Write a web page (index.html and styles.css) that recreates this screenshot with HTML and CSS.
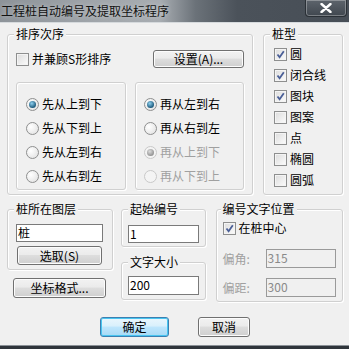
FILE: index.html
```html
<!DOCTYPE html>
<html lang="zh-CN">
<head>
  <meta charset="UTF-8" />
  <title>工程桩自动编号及提取坐标程序</title>
  <link rel="stylesheet" href="styles.css">
</head>
<body>
  <div class="window">
    <div class="titlebar">
      <span class="title">工程桩自动编号及提取坐标程序</span>
      <span class="close">
        <svg width="12" height="10" viewBox="0 0 12 10"><path d="M1.5 1 L10.5 9 M10.5 1 L1.5 9" stroke="#fff" stroke-width="2.4" stroke-linecap="round"/></svg>
      </span>
    </div>

    <div class="client">
      <div class="row-top">
        <div class="group order">
          <span class="legend">排序次序</span>
          <div class="order-head">
            <label class="check"><span class="box"></span>并兼顾S形排序</label>
            <button class="btn setup">设置(A)...</button>
          </div>
          <div class="order-cols">
            <div class="group inner first">
              <label class="radio on"><span class="dot"></span>先从上到下</label>
              <label class="radio"><span class="dot"></span>先从下到上</label>
              <label class="radio"><span class="dot"></span>先从左到右</label>
              <label class="radio"><span class="dot"></span>先从右到左</label>
            </div>
            <div class="group inner second">
              <label class="radio on"><span class="dot"></span>再从左到右</label>
              <label class="radio"><span class="dot"></span>再从右到左</label>
              <label class="radio on off"><span class="dot"></span>再从上到下</label>
              <label class="radio off"><span class="dot"></span>再从下到上</label>
            </div>
          </div>
        </div>

        <div class="group type">
          <span class="legend">桩型</span>
          <label class="check on"><span class="box"></span>圆</label>
          <label class="check on"><span class="box"></span>闭合线</label>
          <label class="check on"><span class="box"></span>图块</label>
          <label class="check"><span class="box"></span>图案</label>
          <label class="check"><span class="box"></span>点</label>
          <label class="check"><span class="box"></span>椭圆</label>
          <label class="check"><span class="box"></span>圆弧</label>
        </div>
      </div>

      <div class="row-bottom">
        <div class="col-left">
          <div class="group layer">
            <span class="legend">桩所在图层</span>
            <div class="field layer-field">桩</div>
            <button class="btn pick">选取(S)</button>
          </div>
          <button class="btn coord">坐标格式...</button>
        </div>

        <div class="col-mid">
          <div class="group start">
            <span class="legend">起始编号</span>
            <div class="field num-field">1</div>
          </div>
          <div class="group size">
            <span class="legend">文字大小</span>
            <div class="field num-field">200</div>
          </div>
        </div>

        <div class="group pos">
          <span class="legend">编号文字位置</span>
          <label class="check on center"><span class="box"></span>在桩中心</label>
          <div class="pos-row first">
            <span class="pos-label">偏角:</span>
            <div class="field dim">315</div>
          </div>
          <div class="pos-row">
            <span class="pos-label">偏距:</span>
            <div class="field dim">300</div>
          </div>
        </div>
      </div>

      <div class="actions">
        <button class="btn default ok">确定</button>
        <button class="btn cancel">取消</button>
      </div>
    </div>
    <div class="frame-bottom"></div>
  </div>
</body>
</html>
```

FILE: styles.css
```css
* {
  box-sizing: border-box;
}

body {
  margin: 0;
  padding: 0;
  font-family: "Noto Sans CJK SC", "Noto Sans", sans-serif;
  font-size: 12px;
  color: #000;
  background: #f0f0f0;
  overflow: hidden;
}

.window {
  width: 349px;
  height: 349px;
  display: flex;
  flex-direction: column;
  background: #f0f0f0;
}

/* title bar */
.titlebar {
  height: 23px;
  display: flex;
  align-items: flex-start;
  justify-content: space-between;
  background: linear-gradient(90deg, #8d9399 0%, #a2a7ac 30%, #a7acb1 46%, #6b7279 56%, #4b525a 68%, #474e56 100%);
  border-bottom: 1px solid #d6dadd;
}

.title {
  padding-left: 1px;
  line-height: 21px;
  color: #111;
  text-shadow: 0 0 4px rgba(255, 255, 255, 0.5);
  white-space: nowrap;
}

.close {
  width: 42px;
  height: 17px;
  margin-right: 2px;
  display: flex;
  align-items: center;
  justify-content: center;
  background: linear-gradient(#5d646c, #40474f);
  border: 1px solid #2a3036;
  border-top: none;
  border-radius: 0 0 4px 4px;
  box-shadow: inset 0 0 0 1px rgba(255, 255, 255, 0.3);
}

.client {
  flex: 1;
  padding: 11px 6px 0 7px;
}

/* group boxes */
.group {
  position: relative;
  border: 1px solid #d0d0d0;
  border-radius: 3px;
  box-shadow: inset 1px 1px 0 #fff, 1px 1px 0 #fff;
}

.legend {
  position: absolute;
  top: -9px;
  left: 6px;
  padding: 0 2px;
  line-height: 16px;
  background: #f0f0f0;
  white-space: nowrap;
}

.row-top {
  display: flex;
  gap: 10px;
}

.order {
  width: 246px;
  height: 161px;
  padding: 15px 8px 0 8px;
}

.order-head {
  display: flex;
  align-items: center;
  justify-content: space-between;
  height: 18px;
}

.order-cols {
  display: flex;
  gap: 9px;
  margin-top: 14px;
}

.inner {
  width: 111px;
  height: 108px;
  padding: 13px 0 0 9px;
  display: flex;
  flex-direction: column;
  gap: 8px;
}

.inner.second {
  width: 110px;
  padding-left: 8px;
}

.type {
  width: 80px;
  height: 161px;
  padding: 11px 0 0 10px;
  display: flex;
  flex-direction: column;
  gap: 5px;
}

/* check boxes and radios */
.check, .radio {
  display: flex;
  align-items: center;
  gap: 3px;
  height: 16px;
  line-height: 16px;
  white-space: nowrap;
}

.box {
  width: 13px;
  height: 13px;
  border: 1px solid #8e8f8f;
  background: linear-gradient(135deg, #dcdcdc, #fcfcfc);
  box-shadow: inset 0 0 0 1px #f4f4f4;
  flex: none;
}

.check.on .box {
  background: linear-gradient(135deg, #dcdcdc, #fcfcfc) center / 11px 11px no-repeat;
  background-image: url("data:image/svg+xml,%3Csvg xmlns='http://www.w3.org/2000/svg' width='11' height='11'%3E%3Cpath d='M2.5 5.5 L4.6 8.2 L8.8 2.2' fill='none' stroke='%234a5f97' stroke-width='1.8'/%3E%3C/svg%3E"), linear-gradient(135deg, #dcdcdc, #fcfcfc);
}

.dot {
  width: 13px;
  height: 13px;
  border-radius: 50%;
  border: 1px solid #8e8f8f;
  background: radial-gradient(circle at 35% 35%, #fff, #dedede);
  flex: none;
  display: flex;
  align-items: center;
  justify-content: center;
}

.radio.on .dot::after {
  content: "";
  width: 7px;
  height: 7px;
  border-radius: 50%;
  background: radial-gradient(circle at 40% 35%, #8fd0ef, #1c5a7c 70%);
}

.radio.off {
  color: #a0a0a0;
}

.radio.off .dot {
  border-color: #c9c9c9;
  background: #f4f4f4;
}

.radio.on.off .dot::after {
  background: radial-gradient(circle at 40% 35%, #dcdcdc, #8f8f8f 75%);
}

/* buttons */
.btn {
  font: inherit;
  color: #000;
  padding: 0;
  border: 1px solid #707070;
  border-radius: 3px;
  background: linear-gradient(#f2f2f2 0%, #ebebeb 45%, #dddddd 50%, #cfcfcf 100%);
  box-shadow: inset 0 0 0 1px #fcfcfc;
  line-height: 16px;
}

.btn.default {
  border-color: #3c7fb1;
  background: linear-gradient(#eaf6fd 0%, #d9f0fc 45%, #bee6fd 50%, #a7d9f5 100%);
  box-shadow: inset 0 0 0 1px #48c5f0;
}

.setup {
  width: 91px;
  height: 18px;
}

/* text fields */
.field {
  height: 18px;
  border: 1px solid #7a7a7a;
  background: #fff;
  line-height: 16px;
  padding-left: 1px;
}

.field.dim {
  width: 70px;
  height: 19px;
  border-color: #9a9a9a;
  background: #f0f0f0;
  color: #8a8a8a;
}

.row-bottom {
  display: flex;
  margin-top: 14px;
}

.layer {
  width: 106px;
  height: 61px;
  padding: 14px 0 0 8px;
}

.layer-field {
  width: 87px;
}

.pick {
  display: block;
  width: 85px;
  height: 19px;
  margin: 4px 0 0 1px;
}

.coord {
  display: block;
  width: 93px;
  height: 20px;
  margin: 8px 0 0 6px;
}

.col-mid {
  width: 85px;
  margin-left: 8px;
}

.start {
  height: 38px;
  padding: 15px 0 0 6px;
}

.size {
  height: 38px;
  margin-top: 15px;
  padding: 13px 0 0 6px;
}

.num-field {
  width: 71px;
}

.size .num-field {
  height: 19px;
}

.pos {
  width: 128px;
  height: 93px;
  margin-left: 10px;
  padding: 10px 0 0 6px;
}

.pos .legend {
  left: 4px;
}

.pos-row {
  display: flex;
  align-items: center;
  margin-top: 10px;
}

.pos-row.first {
  margin-top: 13px;
}

.pos-label {
  width: 43px;
  color: #a0a0a0;
}

.actions {
  display: flex;
  gap: 29px;
  margin: 15px 0 0 93px;
}

.ok {
  width: 69px;
  height: 20px;
}

.cancel {
  width: 52px;
  height: 20px;
}

.frame-bottom {
  height: 4px;
  border-top: 1px solid #8a9096;
  background: #2f353b;
}
```
